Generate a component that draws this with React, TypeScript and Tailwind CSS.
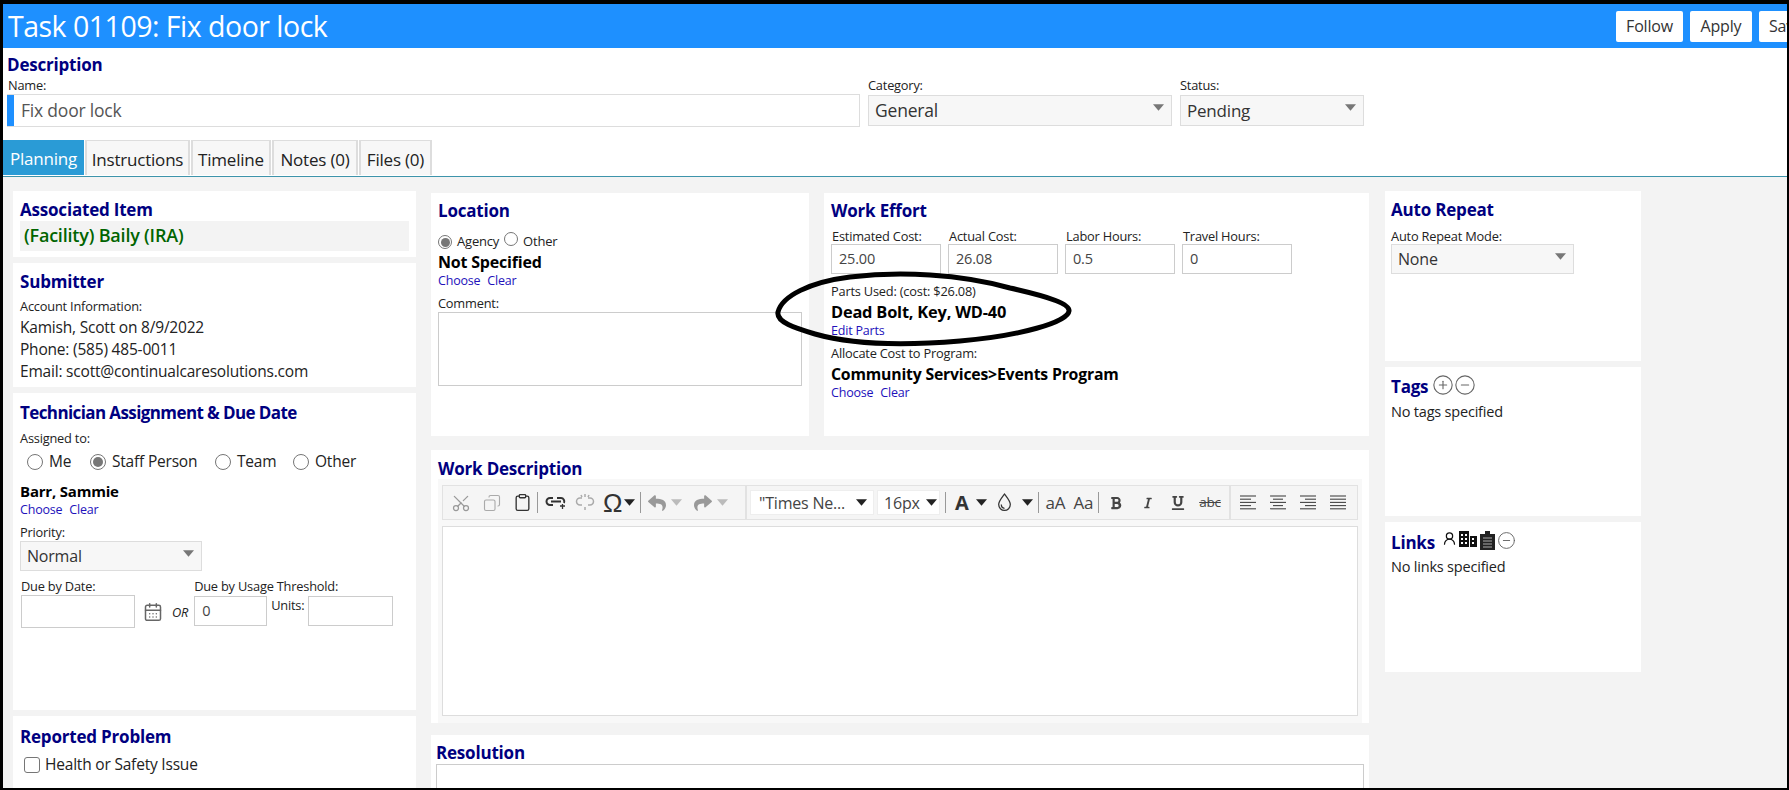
import React from 'react'
import { Scissors, Copy, Clipboard, CirclePlus, CircleMinus, UserRound, CalendarDays } from 'lucide-react'
import { FaReply, FaShare, FaBold, FaItalic, FaUnderline } from 'react-icons/fa'

const Caret = ({ className = '' }: { className?: string }) => (
  <svg width="11" height="7" viewBox="0 0 10 6" className={className}><path d="M0 0h10L5 6z" fill="currentColor" /></svg>
)

const Heading = ({ children, className = '' }: { children: React.ReactNode; className?: string }) => (
  <h3 className={`text-[17px] leading-[22px] font-bold text-[#000080] ${className}`}>{children}</h3>
)

const Label = ({ children, className = '' }: { children: React.ReactNode; className?: string }) => (
  <div className={`text-[12.8px] leading-[15px] text-[#222] ${className}`}>{children}</div>
)

const Select = ({ value, className = '' }: { value: string; className?: string }) => (
  <div className={`flex items-center justify-between bg-[#f7f7f7] border border-[#ddd] pl-[6px] pr-[7px] text-[#333] ${className}`}>
    <span>{value}</span>
    <Caret className="text-[#777] mb-[6px]" />
  </div>
)

const Field = ({ value = '', className = '' }: { value?: string; className?: string }) => (
  <div className={`flex items-center bg-white border border-[#ccc] pl-[7px] text-[14.5px] text-[#444] ${className}`}>{value}</div>
)

const Radio = ({ checked = false, size = 16 }: { checked?: boolean; size?: number }) => (
  <span
    className={`inline-flex items-center justify-center rounded-full border border-[#767676] bg-white shrink-0 ${size === 16 ? 'w-[16px] h-[16px]' : 'w-[14px] h-[14px]'}`}
  >
    {checked && <span className={`rounded-full bg-[#777] ${size === 16 ? 'w-[10px] h-[10px]' : 'w-[9px] h-[9px]'}`} />}
  </span>
)

const Links = ({ className = '' }: { className?: string }) => (
  <div className={`flex gap-[7px] text-[12.5px] leading-[16px] text-[#2211bb] ${className}`}>
    <span>Choose</span>
    <span>Clear</span>
  </div>
)

const Sep = () => <span className="w-px h-[21px] bg-[#999] mx-[5px]" />

// five thin lines, x/width per line changes with the alignment
const AlignIcon = ({ lines }: { lines: [number, number][] }) => (
  <svg width="17" height="15" viewBox="0 0 17 15" stroke="#444" strokeWidth="1.100">
    {lines.map(([x1, x2], i) => (
      <line key={i} x1={x1} x2={x2} y1={1 + i * 3.2} y2={1 + i * 3.2} />
    ))}
  </svg>
)

function Toolbar() {
  return (
    <div className="flex items-center h-[35px] border border-[#e2e2e2] bg-[#f5f5f5] text-[#333] overflow-hidden">
      <div className="flex items-center h-full pl-[8px] w-[304px] shrink-0 border-r-2 border-[#e2e2e2]">
        <Scissors size={20} strokeWidth={1.5} className="text-[#999] rotate-[-90deg]" />
        <Copy size={18} strokeWidth={1.5} className="text-[#aaa] ml-[12px] scale-x-[-1]" />
        <Clipboard size={19} strokeWidth={1.7} className="text-[#333] ml-[12px]" />
        <Sep />
        <svg width="22" height="20" viewBox="0 0 22 20" className="ml-[2px]" fill="none" stroke="#333" strokeWidth="2">
          <path d="M8 5H5a3.500 3.500 0 0 0 0 7h3M12 5h4a3.500 3.500 0 0 1 3 5M6 8.500h10" />
          <path d="M15 13h5M17.500 11v5" strokeWidth="1.300" />
        </svg>
        <svg width="20" height="20" viewBox="0 0 20 20" className="ml-[8px]" fill="none" stroke="#aaa" strokeWidth="1.500">
          <path d="M7 5H5a3.500 3.500 0 0 0 0 7h2M13 5h2a3.500 3.500 0 0 1 0 7h-2M10 1v3M10 14v3M6 2l1 2M14 2l-1 2" />
        </svg>
        <span className="ml-[8px] text-[26px] leading-none text-[#333] font-['Liberation_Sans',sans-serif]">Ω</span>
        <Caret className="ml-[2px] text-[#222]" />
        <Sep />
        <FaReply size={18} className="text-[#999] ml-[2px]" />
        <Caret className="ml-[5px] text-[#bbb]" />
        <FaShare size={18} className="text-[#999] ml-[12px]" />
        <Caret className="ml-[5px] text-[#bbb]" />
      </div>
      <div className="flex items-center h-full pl-[3px]">
        <div className="flex items-center justify-between w-[124px] h-[25px] bg-white border border-[#eee] pl-[8px] pr-[6px] text-[16px] text-[#444]">
          <span>"Times Ne...</span>
          <Caret className="text-[#222]" />
        </div>
        <div className="flex items-center justify-between w-[63px] h-[25px] ml-[3px] bg-white border border-[#eee] pl-[6px] pr-[2px] text-[16px] text-[#444]">
          <span>16px</span>
          <Caret className="text-[#222]" />
        </div>
        <Sep />
        <span className="ml-[4px] text-[20px] leading-none font-bold text-[#333]">A</span>
        <Caret className="ml-[7px] text-[#222]" />
        <svg width="15" height="19" viewBox="0 0 14 18" className="ml-[10px]" fill="none" stroke="#333" strokeWidth="1.200">
          <path d="M7 1c3 4 5.500 6.500 5.500 10a5.500 5.500 0 0 1-11 0C1.500 7.500 4 5 7 1zM4 11c0 2 1 3.500 3 3.500" />
        </svg>
        <Caret className="ml-[10px] text-[#222]" />
        <Sep />
        <span className="ml-[2px] text-[17px] text-[#444]">aA</span>
        <span className="ml-[8px] text-[17px] text-[#444]">Aa</span>
        <Sep />
        <FaBold size={14} className="ml-[5px] text-[#444]" />
        <FaItalic size={12} className="ml-[19px] text-[#444]" />
        <FaUnderline size={14} className="ml-[17px] text-[#444]" />
        <span className="ml-[14px] text-[13.5px] text-[#444] line-through">abc</span>
      </div>
      <div className="flex items-center h-full ml-[8px] pl-[9px] gap-[13px] border-l-2 border-[#e2e2e2]">
        <AlignIcon lines={[[0, 16], [0, 11], [0, 16], [0, 11], [0, 16]]} />
        <AlignIcon lines={[[0, 16], [3, 13], [0, 16], [3, 13], [0, 16]]} />
        <AlignIcon lines={[[0, 16], [5, 16], [0, 16], [5, 16], [0, 16]]} />
        <AlignIcon lines={[[0, 16], [0, 16], [0, 16], [0, 16], [0, 16]]} />
      </div>
    </div>
  )
}

export default function App() {
  const tabs = [
    { name: 'Instructions', cls: 'w-[105px] ml-[1px]' },
    { name: 'Timeline', cls: 'w-[80px] ml-[1px]' },
    { name: 'Notes (0)', cls: 'w-[86px] ml-[1px]' },
    { name: 'Files (0)', cls: 'w-[73px] ml-[1px]' },
  ]
  return (
    <div className="h-[790px] w-[1789px] overflow-hidden border-t-[4px] border-l-[3px] border-r-[2px] border-b-[2px] border-black bg-white font-['Open_Sans',sans-serif] tracking-[-0.2px]">
      {/* Title bar */}
      <div className="flex items-center justify-between h-[44px] bg-[#1e90ff] pl-[5px] overflow-hidden">
        <h1 className="text-[28.500px] text-white tracking-[-0.5px]">Task 01109: Fix door lock</h1>
        <div className="flex gap-[7px] w-[171px] shrink-0 overflow-hidden">
          <button className="h-[31px] w-[67px] shrink-0 bg-white rounded-[2px] text-[16px] text-[#333]">Follow</button>
          <button className="h-[31px] w-[62px] shrink-0 bg-white rounded-[2px] text-[16px] text-[#333]">Apply</button>
          <button className="h-[31px] w-[63px] shrink-0 bg-white rounded-[2px] text-[16px] text-[#333] text-left pl-[10px]">Save</button>
        </div>
      </div>

      {/* Description */}
      <div className="pl-[4px] pt-[6px] h-[92px]">
        <Heading>Description</Heading>
        <div className="flex mt-[2px]">
          <div className="w-[853px]">
            <Label className="pl-[1px]">Name:</Label>
            <div className="flex h-[33px] border-y border-[#ddd] border-r mt-[1px]">
              <span className="w-[7px] bg-[#1e90ff]" />
              <span className="pl-[7px] text-[17.500px] leading-[31px] text-[#555]">Fix door lock</span>
            </div>
          </div>
          <div className="w-[304px] ml-[8px]">
            <Label>Category:</Label>
            <Select value="General" className="h-[31px] mt-[2px] text-[17.500px]" />
          </div>
          <div className="w-[184px] ml-[8px]">
            <Label>Status:</Label>
            <Select value="Pending" className="h-[31px] mt-[2px] text-[17px]" />
          </div>
        </div>
      </div>

      {/* Tabs */}
      <div className="flex h-[37px] border-b border-[#3d94ab] text-[17px] leading-[38px]">
        <div className="w-[81px] h-[35px] bg-[#2a9bd6] text-white text-center">Planning</div>
        {tabs.map(t => (
          <div key={t.name} className={`h-[35px] text-center bg-[#f7f7f7] border-t border-x-2 border-[#ddd] text-[#222] ${t.cls}`}>{t.name}</div>
        ))}
      </div>

      {/* Panels */}
      <div className="flex h-[620px] bg-[#f3f3f3] pl-[10px] pt-[14px] text-[15.500px] text-[#222]">
        <div className="flex flex-col gap-[6px] w-[403px] shrink-0">
          <div className="h-[66px] bg-white px-[7px] pt-[8px]">
            <Heading>Associated Item</Heading>
            <div className="h-[30px] bg-[#f3f3f3] pl-[4px] text-[18px] leading-[28px] font-semibold text-[#006400]">(Facility) Baily (IRA)</div>
          </div>
          <div className="h-[124px] bg-white px-[7px] pt-[8px]">
            <Heading>Submitter</Heading>
            <Label className="mt-[6px]">Account Information:</Label>
            <div className="mt-[2px] leading-[22px]">
              <div>Kamish, Scott on 8/9/2022</div>
              <div>Phone: (585) 485-0011</div>
              <div>Email: scott@continualcaresolutions.com</div>
            </div>
          </div>
          <div className="h-[317px] bg-white px-[7px] pt-[9px]">
            <Heading className="tracking-[-0.6px]">Technician Assignment &amp; Due Date</Heading>
            <Label className="mt-[7px]">Assigned to:</Label>
            <div className="flex items-center mt-[6px] pl-[7px] h-[20px]">
              <Radio />
              <span className="ml-[6px] w-[41px]">Me</span>
              <Radio checked />
              <span className="ml-[6px] w-[103px]">Staff Person</span>
              <Radio />
              <span className="ml-[6px] w-[56px]">Team</span>
              <Radio />
              <span className="ml-[6px]">Other</span>
            </div>
            <div className="mt-[9px] font-bold leading-[20px] text-[15px] text-black">Barr, Sammie</div>
            <Links className="mt-[1px]" />
            <Label className="mt-[7px]">Priority:</Label>
            <Select value="Normal" className="w-[182px] h-[30px] mt-[1px] text-[16px]" />
            <div className="flex mt-[8px]">
              <div className="ml-[1px] w-[114px] shrink-0">
                <Label>Due by Date:</Label>
                <Field className="h-[33px] mt-[1px]" />
              </div>
              <CalendarDays size={20} strokeWidth={1.8} className="ml-[8px] mt-[23px] text-[#666]" />
              <span className="ml-[9px] mt-[24px] text-[12.800px] italic">OR</span>
              <div className="ml-[6px] w-[73px] shrink-0">
                <Label className="whitespace-nowrap">Due by Usage Threshold:</Label>
                <Field value="0" className="h-[30px] mt-[2px]" />
              </div>
              <Label className="ml-[4px] mt-[19px]">Units:</Label>
              <Field className="ml-[4px] mt-[17px] w-[85px] h-[30px]" />
            </div>
          </div>
          <div className="h-[80px] bg-white px-[7px] pt-[10px]">
            <Heading>Reported Problem</Heading>
            <label className="flex items-center mt-[5px] pl-[4px]">
              <span className="w-[16px] h-[16px] rounded-[3px] border border-[#767676]" />
              <span className="ml-[5px]">Health or Safety Issue</span>
            </label>
          </div>
        </div>

        <div className="flex flex-col gap-[14px] w-[938px] shrink-0 ml-[15px] mt-[2px]">
          <div className="flex gap-[15px] h-[243px]">
            <div className="w-[378px] bg-white pl-[7px] pr-[7px] pt-[7px]">
              <Heading>Location</Heading>
              <div className="flex items-center h-[18px] mt-[11px] text-[13px]">
                <Radio checked size={14} />
                <span className="ml-[5px]">Agency</span>
                <span className="ml-[5px]"><Radio size={14} /></span>
                <span className="ml-[5px]">Other</span>
              </div>
              <div className="font-bold leading-[20px] text-[16px] text-black mt-[1px]">Not Specified</div>
              <Links className="mt-[1px]" />
              <Label className="mt-[7px]">Comment:</Label>
              <div className="h-[74px] mt-[1px] border border-[#ccc]" />
            </div>

            <div className="relative w-[545px] bg-white pl-[7px] pt-[7px]">
              <Heading>Work Effort</Heading>
              <div className="flex gap-[7px] mt-[7px]">
                {[['Estimated Cost:', '25.00'], ['Actual Cost:', '26.08'], ['Labor Hours:', '0.5'], ['Travel Hours:', '0']].map(([l, v]) => (
                  <div key={l} className="w-[110px]">
                    <Label className="pl-[1px]">{l}</Label>
                    <Field value={v} className="h-[30px]" />
                  </div>
                ))}
              </div>
              <Label className="mt-[10px]">Parts Used: (cost: $26.08)</Label>
              <div className="mt-[3px] font-bold leading-[20px] text-[16.400px] text-black">Dead Bolt, Key, WD-40</div>
              <div className="text-[12.500px] leading-[16px] text-[#2211bb] mt-[1px]">Edit Parts</div>
              <Label className="mt-[7px]">Allocate Cost to Program:</Label>
              <div className="mt-[3px] font-bold leading-[20px] text-[15.800px] text-black">Community Services&gt;Events Program</div>
              <Links className="mt-[1px]" />
              {/* marker circle drawn on the screenshot */}
              <svg width="300" height="78" viewBox="775 270 300 78" fill="none" className="absolute left-[-49px] top-[77px]">
                <path d="M778 312C782 296 810 282 850 277C900 271 960 274 1010 288C1050 297 1070 304 1069 311C1068 322 1020 336 960 341C900 346 850 344 815 334C795 328 776 322 778 312Z" stroke="#000" strokeWidth="5" />
              </svg>
            </div>
          </div>

          <div className="h-[273px] bg-white px-[7px] pt-[8px]">
            <Heading>Work Description</Heading>
            <div className="mt-[-1px] h-[244px] bg-[#f8f8f8] p-[4px] pt-[6px]">
              <Toolbar />
              <div className="mt-[6px] h-[190px] bg-white border border-[#ddd]" />
            </div>
          </div>

          <div className="h-[60px] mt-[-2px] bg-white px-[5px] pt-[7px]">
            <Heading>Resolution</Heading>
            <div className="h-[40px] border border-[#ccc]" />
          </div>
        </div>

        <div className="flex flex-col gap-[6px] w-[256px] shrink-0 ml-[16px]">
          <div className="h-[170px] bg-white px-[6px] pt-[8px]">
            <Heading>Auto Repeat</Heading>
            <Label className="mt-[8px]">Auto Repeat Mode:</Label>
            <Select value="None" className="w-[183px] h-[30px] text-[16px]" />
          </div>
          <div className="h-[149px] bg-white px-[6px] pt-[9px]">
            <div className="flex items-start">
              <Heading>Tags</Heading>
              <CirclePlus size={22} strokeWidth={1.2} className="ml-[4px] text-[#666] mt-[-2px]" />
              <CircleMinus size={22} strokeWidth={1.2} className="text-[#666] mt-[-2px]" />
            </div>
            <Label className="mt-[6px] text-[14.500px]">No tags specified</Label>
          </div>
          <div className="h-[150px] bg-white px-[6px] pt-[9px]">
            <div className="flex items-start">
              <Heading className="mt-[1px]">Links</Heading>
              <UserRound size={15} className="ml-[7px] text-[#111]" />
              <svg width="18" height="16" viewBox="0 0 18 16" className="ml-[2px]">
                <path fill="#111" d="M0 0h10v16H0zM11 5h7v11h-7z" />
                <path fill="#fff" d="M2 3h2v2H2zM6 3h2v2H6zM2 7h2v2H2zM6 7h2v2H6zM2 11h2v2H2zM6 11h2v2H6zM13 7h2v2h-2zM13 11h2v2h-2z" />
              </svg>
              <svg width="15" height="19" viewBox="0 0 15 19" className="ml-[3px]">
                <path fill="#222" d="M0 3h5V0h5v3h5v16H0z" />
                <path stroke="#aaa" strokeWidth="1.200" d="M3 7h9M3 10h9M3 13h9M3 16h9" />
              </svg>
              <CircleMinus size={19} strokeWidth={1.2} className="text-[#666] ml-[2px]" />
            </div>
            <Label className="mt-[5px] text-[14.500px]">No links specified</Label>
          </div>
        </div>
      </div>
    </div>
  )
}
